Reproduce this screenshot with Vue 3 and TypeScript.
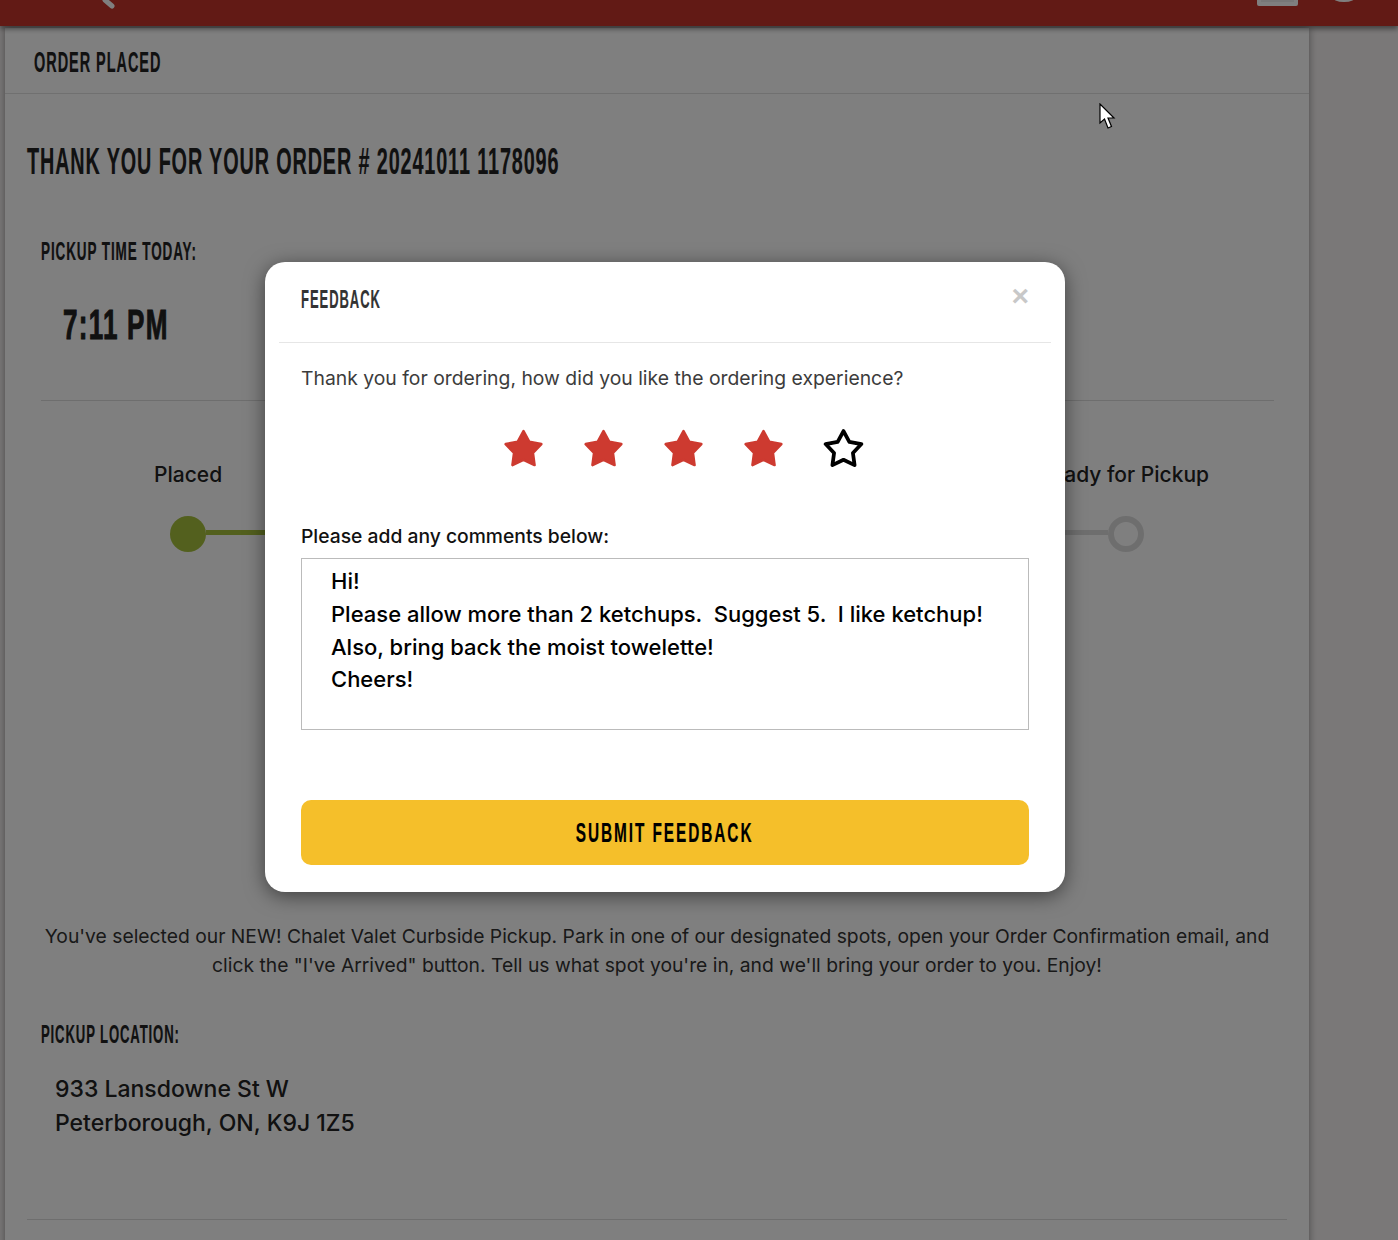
<script setup lang="ts">
const comments = `Hi!
Please allow more than 2 ketchups.  Suggest 5.  I like ketchup!
Also, bring back the moist towelette!
Cheers!`
const stars = [true, true, true, true, false]
const starPath = 'M12 1.8 15.41 8.11 22.46 9.4 17.52 14.59 18.47 21.7 12 18.6 5.53 21.7 6.48 14.59 1.54 9.4 8.59 8.11Z'
</script>

<template>
  <div class="page">
    <header class="topbar">
      <svg class="top-icon search" width="30" height="10" viewBox="0 0 30 10"><path d="M3 0 10 6" /></svg>
      <div class="top-right">
        <span class="top-box"></span>
        <span class="top-arc"></span>
      </div>
    </header>
    <main class="panel">
      <div class="panel-head"><h2 class="cond head-title">ORDER PLACED</h2></div>
      <div class="panel-body">
        <h1 class="cond thanks">THANK YOU FOR YOUR ORDER # 20241011 1178096</h1>
        <section class="block time-block">
          <h3 class="cond label">PICKUP TIME TODAY:</h3>
          <div class="cond time">7:11 PM</div>
        </section>
        <section class="stepper">
          <div class="step-labels">
            <span>Placed</span>
            <span>Ready for Pickup</span>
          </div>
          <div class="track">
            <span class="dot done"></span>
            <span class="line on"></span>
            <span class="line off"></span>
            <span class="dot todo"></span>
          </div>
        </section>
        <p class="note">You've selected our NEW! Chalet Valet Curbside Pickup. Park in one of our designated spots, open your Order Confirmation email, and click the "I've Arrived" button. Tell us what spot you're in, and we'll bring your order to you. Enjoy!</p>
        <section class="block loc-block">
          <h3 class="cond label loc-label">PICKUP LOCATION:</h3>
          <address class="addr">933 Lansdowne St W<br />Peterborough, ON, K9J 1Z5</address>
        </section>
        <hr class="rule" />
      </div>
    </main>

    <div class="backdrop"></div>

    <svg class="cursor" width="17" height="27" viewBox="0 0 17 27">
      <path d="M1 1V20L5.500 16 9 25 12.500 23.500 9 15H15Z" fill="#fff" stroke="#000" stroke-width="1.200" />
    </svg>

    <div class="modal">
      <div class="modal-head">
        <h4 class="cond modal-title">FEEDBACK</h4>
        <span class="close">×</span>
      </div>
      <div class="modal-body">
        <p class="ask">Thank you for ordering, how did you like the ordering experience?</p>
        <div class="stars">
          <svg v-for="(on, i) in stars" :key="i" class="star" width="41" height="41" viewBox="0 0 24 24">
            <path :d="starPath" :class="on ? 'star-on' : 'star-off'" />
          </svg>
        </div>
        <label class="comment-label" for="comments">Please add any comments below:</label>
        <textarea id="comments" class="comments" readonly :value="comments"></textarea>
        <button class="submit" type="button"><span class="cond submit-text">SUBMIT FEEDBACK</span></button>
      </div>
    </div>
  </div>
</template>

<style>
html, body { margin: 0; padding: 0; }
</style>

<style scoped>
* { box-sizing: border-box; }
.page {
  position: relative;
  width: 1398px;
  height: 1240px;
  overflow: hidden;
  background: #f5f1f1;
  font-family: Inter, Roboto, "Liberation Sans", sans-serif;
  color: #333;
  display: flex;
  flex-direction: column;
}
.cond {
  font-family: "Liberation Sans Narrow", "Liberation Sans", sans-serif;
  font-weight: 700;
  display: inline-block;
  transform-origin: left center;
  white-space: nowrap;
  margin: 0;
  -webkit-text-stroke: .2px currentColor;
}
.topbar {
  position: relative;
  height: 26px;
  flex: none;
  background: #c5352a;
  box-shadow: 0 3px 5px rgba(0, 0, 0, .45);
  z-index: 2;
  display: flex;
  justify-content: space-between;
}
.top-icon { position: absolute; left: 102px; top: 0; }
.top-icon path { fill: none; stroke: #fff; stroke-width: 5; stroke-linecap: round; }
.top-right { position: absolute; left: 1257px; top: -8px; display: flex; gap: 34px; }
.top-box { width: 41px; height: 14px; border: 4px solid #fff; border-radius: 2px; background: #eee; }
.top-arc { width: 24px; height: 11px; margin-top: -1px; border: 3px solid #fff; border-radius: 50%; }
.panel {
  flex: none;
  margin: 2px 0 0 5px;
  width: 1304px;
  height: 1300px;
  background: #fff;
  box-shadow: 0 0 8px rgba(0, 0, 0, .4);
}
.panel-head {
  height: 66px;
  border-bottom: 1px solid #e0e0e0;
  padding: 15px 0 0 29px;
}
.head-title { font-size: 29px; line-height: 38px; color: #222; letter-spacing: 1.900px; transform: scaleX(.5); }
.panel-body { padding: 0 22px; }
.thanks { font-size: 36px; line-height: 44px; color: #222; margin-top: 46px; letter-spacing: 1.600px; transform: scaleX(.55); }
.block { padding-left: 14px; }
.time-block { margin: 51px 13px 0 0; height: 186px; position: relative; }
.time-block::after { content: ""; display: block; height: 1px; background: #ddd; }
.label { font-size: 26px; line-height: 32px; color: #222; letter-spacing: 1.700px; transform: scaleX(.52); display: block; }
.loc-label { transform: scaleX(.505); }
.time { display: block; font-size: 42px; line-height: 52px; color: #222; margin: 32px 0 0 22px; letter-spacing: 2px; transform: scaleX(.62); height: 101px; -webkit-text-stroke: 1px currentColor; }
.stepper { padding: 0 43px 0 0; }
.step-labels {
  display: flex;
  justify-content: space-between;
  padding: 40px 35px 0 127px;
  font-size: 21px;
  line-height: 28px;
  font-weight: 500;
  color: #222;
}
.track { display: flex; align-items: center; margin: 27px 0 0 143px; width: 974px; height: 36px; }
.dot { width: 36px; height: 36px; border-radius: 50%; flex: none; }
.dot.done { background: #a6c03c; }
.dot.todo { background: #fff; border: 6px solid #ddd; }
.line { flex: 1; height: 5px; margin-top: -4px; }
.line.on { background: #a6c03c; }
.line.off { background: #ddd; }
.note {
  margin: 370px 0 0;
  font-size: 19.300px;
  line-height: 29px;
  text-align: center;
  color: #333;
  width: 1260px;
}
.loc-block { margin-top: 38px; }
.addr { font-style: normal; font-size: 23px; line-height: 34px; font-weight: 500; color: #222; margin: 22px 0 0 14px; }
.rule { border: 0; height: 1px; background: #ddd; margin: 79px 0 0; width: 1260px; }
.backdrop { position: absolute; inset: 0; background: rgba(0, 0, 0, .5); z-index: 5; }
.cursor { position: absolute; left: 1099px; top: 103px; z-index: 6; }
.modal {
  position: absolute;
  left: 265px;
  top: 262px;
  width: 800px;
  height: 630px;
  background: #fff;
  border-radius: 20px;
  box-shadow: 0 4px 20px rgba(0, 0, 0, .5);
  padding: 0 14px;
  z-index: 6;
}
.modal-head {
  position: relative;
  height: 81px;
  border-bottom: 1px solid #e6e6e6;
  padding: 20px 0 0 22px;
}
.modal-title { font-size: 26px; line-height: 34px; color: #333; letter-spacing: 1.900px; transform: scaleX(.5); }
.close {
  position: absolute;
  right: 22px;
  top: 16px;
  font-family: "Liberation Sans", sans-serif;
  font-weight: 700;
  font-size: 30px;
  line-height: 36px;
  color: #c8c8c8;
}
.modal-body { padding: 0 22px; }
.ask { margin: 22px 0 0; font-size: 19.350px; line-height: 26px; color: #3c3c3c; }
.stars { display: flex; justify-content: center; gap: 39px; margin-top: 37px; height: 41px; padding-left: 36px; }
.star-on { fill: #cd3a30; stroke: #cd3a30; stroke-width: 1.500; stroke-linejoin: round; }
.star-off { fill: #fff; stroke: #000; stroke-width: 2.200; stroke-linejoin: round; }
.comment-label { display: block; margin-top: 54px; font-size: 19.300px; line-height: 26px; font-weight: 500; color: #111; }
.comments {
  display: block;
  width: 728px;
  height: 172px;
  margin-top: 9px;
  border: 1px solid #bbb;
  padding: 6px 29px;
  font-family: inherit;
  font-size: 22px;
  line-height: 32.800px;
  font-weight: 500;
  color: #000;
  resize: none;
  outline: none;
  background: #fff;
  white-space: pre-wrap;
  overflow: hidden;
}
.submit {
  display: flex;
  align-items: center;
  justify-content: center;
  width: 728px;
  height: 65px;
  margin-top: 70px;
  background: #f5bf2a;
  border: 0;
  border-radius: 10px;
}
.submit-text { font-size: 28px; line-height: 36px; color: #000; transform-origin: center; transform: scaleX(.55); letter-spacing: 3.500px; }
</style>
